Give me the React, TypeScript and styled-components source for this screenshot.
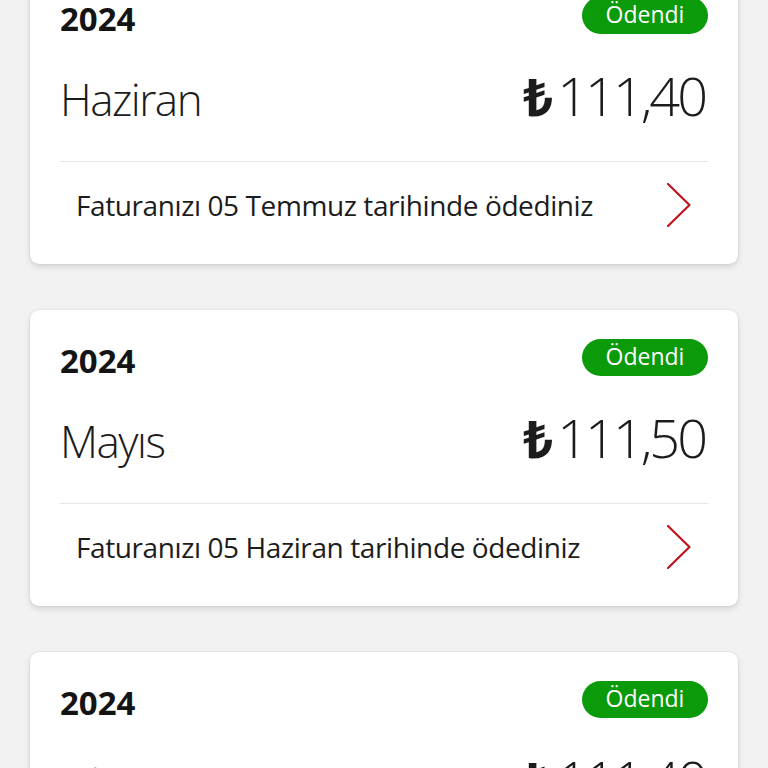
import React from "react";
import styled, { createGlobalStyle } from "styled-components";

const GlobalStyle = createGlobalStyle`
  html, body {
    margin: 0;
    padding: 0;
    background: #f2f2f2;
    overflow: hidden;
  }
  body {
    font-family: "Open Sans", "Noto Sans", sans-serif;
    color: #1c1c1c;
  }
`;

const Page = styled.div`
  height: 768px;
  overflow: hidden;
`;

const List = styled.div`
  display: flex;
  flex-direction: column;
  gap: 46px;
  padding: 0 30px;
  margin-top: -32px;
`;

const Card = styled.section`
  background: #ffffff;
  border-radius: 9px;
  box-shadow: 0 3px 6px rgba(0, 0, 0, 0.12), 0 0 2px rgba(0, 0, 0, 0.12);
  padding: 29px 30px 16px;
`;

const Header = styled.div`
  display: flex;
  justify-content: space-between;
  align-items: center;
  height: 37px;
`;

const Year = styled.span`
  font-weight: 700;
  font-size: 33px;
  line-height: 1;
  padding-top: 6px;
  color: #141414;
`;

const Badge = styled.span`
  display: inline-flex;
  align-items: center;
  justify-content: center;
  width: 126px;
  height: 37px;
  border-radius: 19px;
  background: #0a9a0a;
  color: #ffffff;
  font-size: 23px;
  line-height: 1;
  padding-bottom: 2px;
  box-sizing: border-box;
`;

const AmountRow = styled.div`
  display: flex;
  justify-content: space-between;
  align-items: baseline;
  margin-top: 31px;
  height: 60px;
`;

const Month = styled.span`
  font-size: 44px;
  font-weight: 300;
  line-height: 60px;
  letter-spacing: -1.5px;
`;

const Amount = styled.span`
  display: inline-flex;
  align-items: baseline;
  line-height: 60px;
`;

const Lira = styled.span`
  font-family: "Noto Sans", "DejaVu Sans", sans-serif;
  font-weight: 700;
  font-size: 52px;
  margin-right: 4px;
`;

const Figure = styled.span`
  font-size: 54px;
  font-weight: 300;
  letter-spacing: -3px;
  padding-right: 3px;
`;

const Divider = styled.div`
  height: 1px;
  background: #e6e6e6;
  margin-top: 36px;
`;

const DetailRow = styled.div`
  display: flex;
  justify-content: space-between;
  align-items: center;
  height: 86px;
  padding: 0 16px;
`;

const DetailText = styled.span`
  font-size: 28px;
  letter-spacing: -0.4px;
  color: #1c1c1c;
`;

const Chevron = () => (
  <svg width="26" height="46" viewBox="0 0 26 46" fill="none">
    <path d="M2 2 L23.5 23 L2 44" stroke="#c0141c" strokeWidth="2.2" strokeLinecap="round" strokeLinejoin="round" />
  </svg>
);

type Bill = { year: string; month: string; amount: string; date: string };

const bills: Bill[] = [
  { year: "2024", month: "Haziran", amount: "111,40", date: "05 Temmuz" },
  { year: "2024", month: "Mayıs", amount: "111,50", date: "05 Haziran" },
  { year: "2024", month: "Nisan", amount: "111,40", date: "05 Mayıs" },
];

export default function App() {
  return (
    <Page>
      <GlobalStyle />
      <List>
        {bills.map((b, i) => (
          <Card key={i}>
            <Header>
              <Year>{b.year}</Year>
              <Badge>Ödendi</Badge>
            </Header>
            <AmountRow>
              <Month>{b.month}</Month>
              <Amount>
                <Lira>₺</Lira>
                <Figure>{b.amount}</Figure>
              </Amount>
            </AmountRow>
            <Divider />
            <DetailRow>
              <DetailText>Faturanızı {b.date} tarihinde ödediniz</DetailText>
              <Chevron />
            </DetailRow>
          </Card>
        ))}
      </List>
    </Page>
  );
}
